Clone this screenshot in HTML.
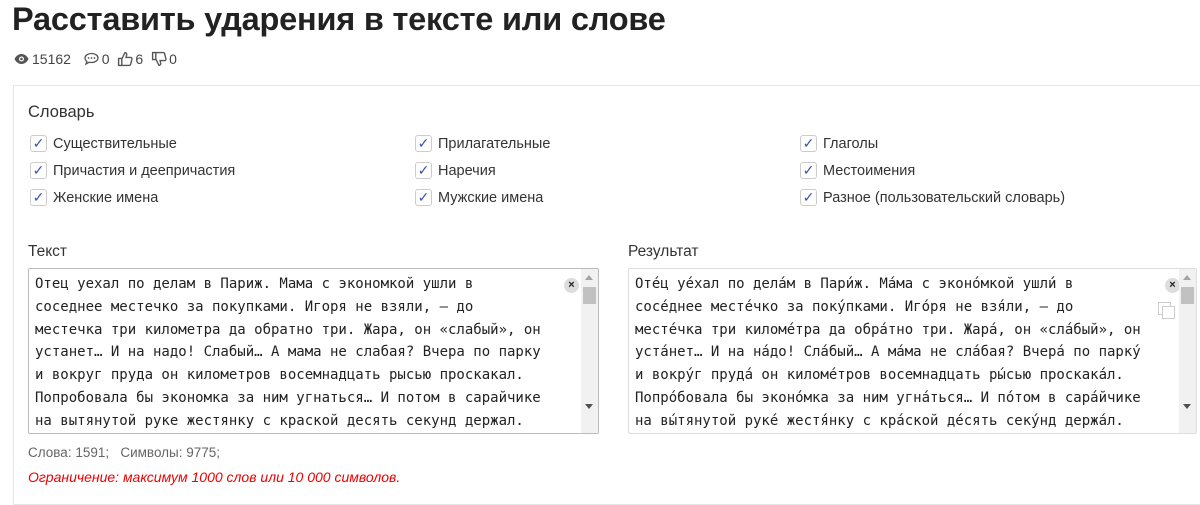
<!DOCTYPE html>
<html><head><meta charset="utf-8"><style>
*{box-sizing:border-box}
body{margin:0;width:1200px;height:488px;overflow:hidden;background:#fff;font-family:"Liberation Sans",sans-serif;color:#333;position:relative}
.a{position:absolute;white-space:nowrap}
h1{position:absolute;left:12px;top:1px;margin:0;font-size:32.5px;font-weight:bold;color:#222;letter-spacing:-0.2px}
.stats{left:13px;top:51px;font-size:14px;color:#444;display:flex;align-items:center;gap:2px}
.stats svg{vertical-align:middle}
.panel{position:absolute;left:13px;top:85px;width:1200px;height:420px;border:1px solid #e6e6e6;border-right:none}
.cb{position:absolute;font-size:14.5px;color:#333;display:flex;align-items:center}
.cb i{display:inline-block;width:17px;height:17px;border:1px solid #ccc;border-radius:3px;margin-right:6px;font-style:normal;color:#3a55b4;font-size:14px;line-height:15px;text-align:center}
.lbl{font-size:15.5px;color:#333}
.ta{position:absolute;border:1px solid #bbb;border-radius:2px;background:#fff;overflow:hidden}
.ta pre{margin:0;position:absolute;left:6px;top:4px;font-family:"DejaVu Sans Mono","Liberation Mono",monospace;font-size:14px;line-height:22.8px;color:#222}
.sb{position:absolute;right:0;top:0;width:17px;height:100%;background:#f1f1f1}
.th{position:absolute;left:2px;top:18px;width:13px;height:17px;background:#c1c1c1}
.up,.dn{position:absolute;left:4px;width:0;height:0;border-left:4.5px solid transparent;border-right:4.5px solid transparent}
.up{top:6px;border-bottom:5px solid #a3a3a3}
.dn{bottom:24px;border-top:5px solid #505050}
.x{position:absolute;width:15px;height:15px;border-radius:50%;background:#ddd;font-size:11px;font-weight:bold;text-align:center;line-height:15px;color:#222}
</style></head><body>
<h1>Расставить ударения в тексте или слове</h1>
<div class="a stats">
<svg width="17" height="12" viewBox="0 0 16 12"><path d="M1 6C3 2 6 1 8 1s5 1 7 5c-2 4-5 5-7 5S3 10 1 6z" fill="#555"/><circle cx="8" cy="6" r="2.5" fill="#fff"/><circle cx="8" cy="6" r="1.3" fill="#555"/></svg>
<span>15162</span>&nbsp;&nbsp;
<svg width="17" height="14" viewBox="0 0 16 14"><path d="M8 1.5c3.6 0 6.5 2 6.5 4.5S11.6 10.5 8 10.5c-.8 0-1.5-.1-2.2-.3L2.5 12l.9-2.6C2.2 8.6 1.5 7.4 1.5 6 1.5 3.5 4.4 1.5 8 1.5z" fill="none" stroke="#555" stroke-width="1.3"/><circle cx="5" cy="6" r=".9" fill="#555"/><circle cx="8" cy="6" r=".9" fill="#555"/><circle cx="11" cy="6" r=".9" fill="#555"/></svg>
<span>0</span>&nbsp;
<svg width="16" height="16" viewBox="0 0 15 15"><path d="M1.5 7h3v6.5h-3zM4.5 7.5L7.5 1.5c1.3 0 1.8 1 1.5 2.5L8.5 6h4.3c.9 0 1.4.8 1.2 1.6l-1.2 4.8c-.2.7-.7 1.1-1.4 1.1H4.5" fill="none" stroke="#555" stroke-width="1.3"/></svg>
<span>6</span>&nbsp;
<svg width="16" height="16" viewBox="0 0 15 15" style="transform:scaleY(-1)"><path d="M1.5 7h3v6.5h-3zM4.5 7.5L7.5 1.5c1.3 0 1.8 1 1.5 2.5L8.5 6h4.3c.9 0 1.4.8 1.2 1.6l-1.2 4.8c-.2.7-.7 1.1-1.4 1.1H4.5" fill="none" stroke="#555" stroke-width="1.3"/></svg>
<span>0</span>
</div>
<div class="panel"></div>
<div class="a lbl" style="left:28px;top:103px;font-size:16.5px">Словарь</div>
<div class="cb" style="left:30px;top:135px"><i>✓</i>Существительные</div>
<div class="cb" style="left:30px;top:162px"><i>✓</i>Причастия и деепричастия</div>
<div class="cb" style="left:30px;top:189px"><i>✓</i>Женские имена</div>
<div class="cb" style="left:415px;top:135px"><i>✓</i>Прилагательные</div>
<div class="cb" style="left:415px;top:162px"><i>✓</i>Наречия</div>
<div class="cb" style="left:415px;top:189px"><i>✓</i>Мужские имена</div>
<div class="cb" style="left:800px;top:135px"><i>✓</i>Глаголы</div>
<div class="cb" style="left:800px;top:162px"><i>✓</i>Местоимения</div>
<div class="cb" style="left:800px;top:189px"><i>✓</i>Разное (пользовательский словарь)</div>
<div class="a lbl" style="left:28px;top:243px">Текст</div>
<div class="a lbl" style="left:628px;top:243px">Результат</div>
<div class="ta" style="left:28px;top:268px;width:571px;height:166px">
<pre>Отец уехал по делам в Париж. Мама с экономкой ушли в
соседнее местечко за покупками. Игоря не взяли, — до
местечка три километра да обратно три. Жара, он «слабый», он
устанет… И на надо! Слабый… А мама не слабая? Вчера по парку
и вокруг пруда он километров восемнадцать рысью проскакал.
Попробовала бы экономка за ним угнаться… И потом в сарайчике
на вытянутой руке жестянку с краской десять секунд держал.</pre>
<div class="x" style="left:535px;top:9px">×</div>
<div class="sb"><div class="up"></div><div class="th"></div><div class="dn"></div></div>
</div>
<div class="ta" style="left:628px;top:268px;width:569px;height:166px;border-color:#ddd">
<pre>Оте́ц уе́хал по дела́м в Пари́ж. Ма́ма с эконо́мкой ушли́ в
сосе́днее месте́чко за поку́пками. Иго́ря не взя́ли, — до
месте́чка три киломе́тра да обра́тно три. Жара́, он «сла́бый», он
уста́нет… И на на́до! Сла́бый… А ма́ма не сла́бая? Вчера́ по парку́
и вокру́г пруда́ он киломе́тров восемнадцать ры́сью проскака́л.
Попро́бовала бы эконо́мка за ним угна́ться… И по́том в сара́йчике
на вы́тянутой руке́ жестя́нку с кра́ской де́сять секу́нд держа́л.</pre>
<div class="x" style="left:536px;top:9px">×</div>
<div style="position:absolute;left:529px;top:33px;width:13px;height:13px;border:1px solid #ccc"></div>
<div style="position:absolute;left:533px;top:37px;width:13px;height:13px;border:1px solid #ccc;background:#fff"></div>
<div class="sb"><div class="up"></div><div class="th"></div><div class="dn"></div></div>
</div>
<div class="a" style="left:28px;top:445px;font-size:13.5px;color:#666">Слова: 1591;&nbsp;&nbsp; Символы: 9775;</div>
<div class="a" style="left:28px;top:469px;font-size:14px;color:#e00;font-style:italic">Ограничение: максимум 1000 слов или 10 000 символов.</div>
</body></html>
